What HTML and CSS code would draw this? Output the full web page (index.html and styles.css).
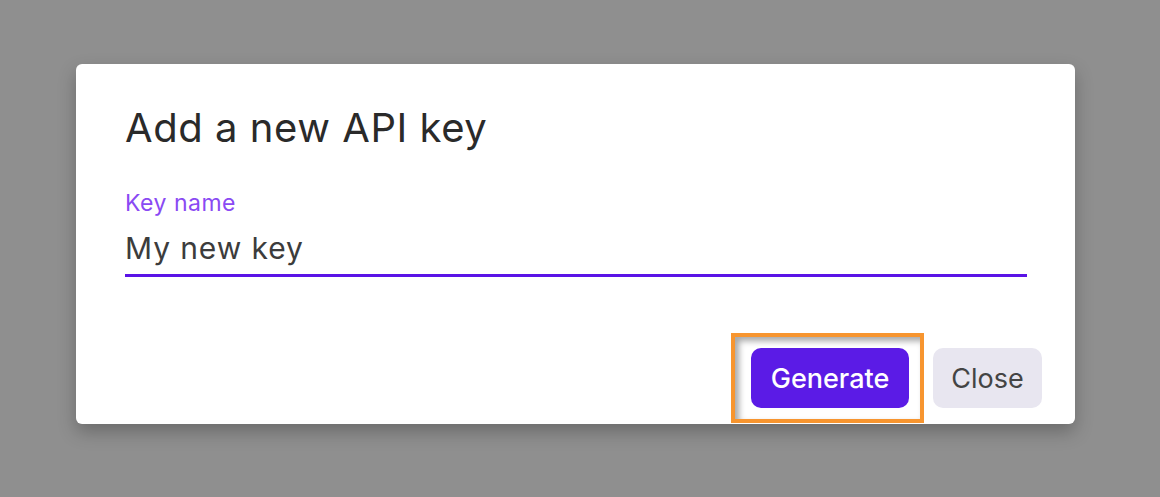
FILE: index.html
```html
<!DOCTYPE html>
<html>
<head>
<meta charset="utf-8">
<link rel="stylesheet" href="styles.css">
</head>
<body>
<div class="backdrop">
  <div class="dialog">
    <h1 class="title">Add a new API key</h1>
    <div class="field">
      <label class="label">Key name</label>
      <div class="input">My new key</div>
    </div>
    <div class="actions">
      <div class="highlight-wrap">
        <button class="btn primary">Generate</button>
        <div class="highlight"></div>
      </div>
      <button class="btn secondary">Close</button>
    </div>
  </div>
</div>
</body>
</html>
```
FILE: styles.css
```css
html, body {
  margin: 0;
  padding: 0;
  width: 1160px;
  height: 497px;
  overflow: hidden;
}
body {
  background: #8f8f8f;
  font-family: Inter, "Noto Sans", sans-serif;
}
.backdrop {
  padding: 64px 0 0 76px;
}
.dialog {
  box-sizing: border-box;
  width: 999px;
  height: 360px;
  background: #ffffff;
  border-radius: 6px;
  box-shadow: 0 8px 18px rgba(0,0,0,0.25);
  padding: 0 33px 16px 49px;
  display: flex;
  flex-direction: column;
}
.title {
  margin: 0;
  padding-top: 40px;
  font-size: 40px;
  font-weight: 400;
  color: #2a2a2a;
  line-height: 48px;
  letter-spacing: 0.55px;
}
.field {
  margin-top: 39px;
  margin-right: 15px;
  display: flex;
  flex-direction: column;
}
.label {
  font-size: 23px;
  color: #8a4af3;
  line-height: 24px;
  letter-spacing: 0.5px;
}
.input {
  margin-top: 13px;
  font-size: 30px;
  color: #3c3c3c;
  line-height: 40px;
  padding-bottom: 6px;
  border-bottom: 3px solid #5a13e6;
  letter-spacing: 0.9px;
}
.actions {
  margin-top: auto;
  display: flex;
  justify-content: flex-end;
  gap: 24px;
}
.highlight-wrap {
  position: relative;
  display: flex;
}
.btn {
  border: none;
  height: 60px;
  border-radius: 10px;
  font-family: Inter, "Noto Sans", sans-serif;
  font-size: 27px;
  padding: 0;
}
.primary {
  width: 158px;
  background: #5b1be6;
  color: #ffffff;
  font-weight: 500;
}
.secondary {
  width: 109px;
  background: #e8e6f0;
  color: #444444;
  font-weight: 400;
}
.highlight {
  position: absolute;
  left: -20px;
  top: -15px;
  right: -15px;
  bottom: -15px;
  border: 4px solid #f7952f;
  box-shadow: inset 4px 4px 6px rgba(0,0,0,0.35);
  pointer-events: none;
}
```
